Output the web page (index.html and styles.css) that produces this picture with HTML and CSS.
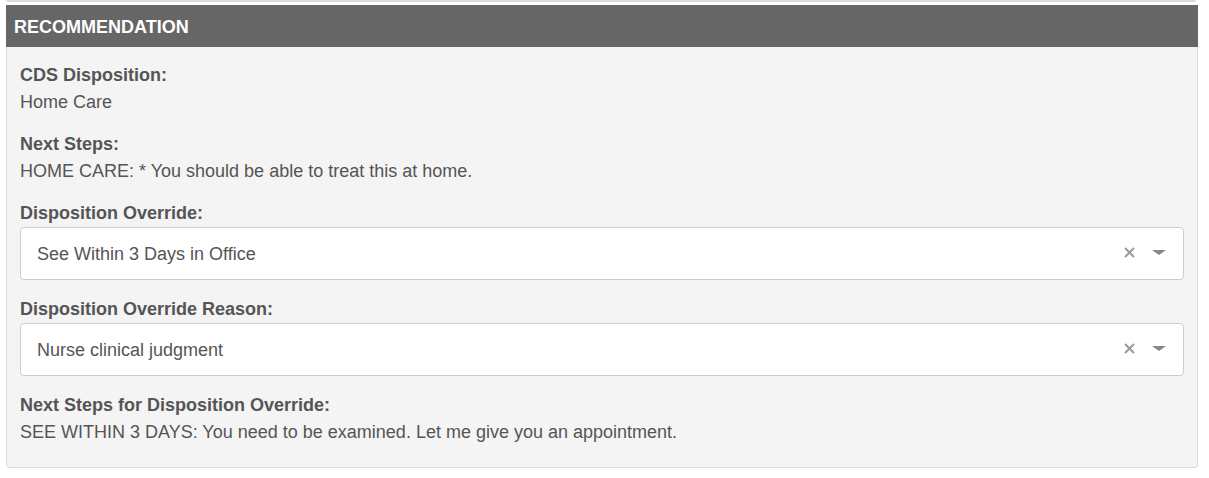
FILE: index.html
```html
<!DOCTYPE html>
<html>
<head>
<meta charset="utf-8">
<link rel="stylesheet" href="styles.css">
</head>
<body>
<div class="page">
  <div class="prev-panel"></div>
  <section class="panel">
    <div class="panel-heading">RECOMMENDATION</div>
    <div class="panel-body">
      <div class="field">
        <div class="label">CDS Disposition:</div>
        <div class="value">Home Care</div>
      </div>
      <div class="field">
        <div class="label">Next Steps:</div>
        <div class="value">HOME CARE: * You should be able to treat this at home.</div>
      </div>
      <div class="field field-select">
        <div class="label label-select">Disposition Override:</div>
        <div class="select">
          <span class="select-text">See Within 3 Days in Office</span>
          <svg class="clear" width="11" height="11" viewBox="0 0 11 11"><path d="M1 1 L10 10 M10 1 L1 10" stroke="#999" stroke-width="2" fill="none"/></svg>
          <span class="arrow"></span>
        </div>
      </div>
      <div class="field field-select">
        <div class="label label-select">Disposition Override Reason:</div>
        <div class="select">
          <span class="select-text">Nurse clinical judgment</span>
          <svg class="clear" width="11" height="11" viewBox="0 0 11 11"><path d="M1 1 L10 10 M10 1 L1 10" stroke="#999" stroke-width="2" fill="none"/></svg>
          <span class="arrow"></span>
        </div>
      </div>
      <div class="field field-last">
        <div class="label">Next Steps for Disposition Override:</div>
        <div class="value">SEE WITHIN 3 DAYS: You need to be examined. Let me give you an appointment.</div>
      </div>
    </div>
  </section>
</div>
</body>
</html>
```
FILE: styles.css
```css
html, body {
  margin: 0;
  padding: 0;
  background: #ffffff;
}
body {
  font-family: "Liberation Sans", Arial, sans-serif;
  font-size: 18px;
  color: #555555;
}
.page {
  padding: 0 11px 0 6px;
  width: 1192px;
}
.prev-panel {
  height: 2px;
  background: #dcdcdc;
  border-radius: 0 0 3px 3px;
  margin-right: 2px;
}
.panel {
  margin-top: 3px;
}
.panel-heading {
  background: #666666;
  color: #ffffff;
  font-weight: bold;
  font-size: 18px;
  line-height: 22px;
  padding: 11px 8px 9px 8px;
}
.panel-body {
  background: #f4f4f4;
  border: 1px solid #dddddd;
  border-top: none;
  border-radius: 0 0 4px 4px;
  padding: 17px 13px 24px 13px;
}
.field {
  margin-bottom: 20px;
}
.field-select {
  margin-bottom: 18px;
}
.field-last {
  margin-bottom: 0;
}
.label {
  font-weight: bold;
  line-height: 22px;
  margin-bottom: 5px;
}
.label-select {
  margin-bottom: 3px;
}
.value {
  line-height: 22px;
}
.select {
  display: flex;
  align-items: center;
  height: 51px;
  background: #ffffff;
  border: 1px solid #cccccc;
  border-radius: 4px;
  padding: 0 16px;
}
.select-text {
  flex: 1;
  line-height: 22px;
}
.clear {
  margin-right: 17px;
  margin-top: -3px;
}
.arrow {
  width: 0;
  height: 0;
  border-left: 7px solid transparent;
  border-right: 7px solid transparent;
  border-top: 5px solid #888888;
  margin-right: 1px;
  margin-top: -3px;
}
```
